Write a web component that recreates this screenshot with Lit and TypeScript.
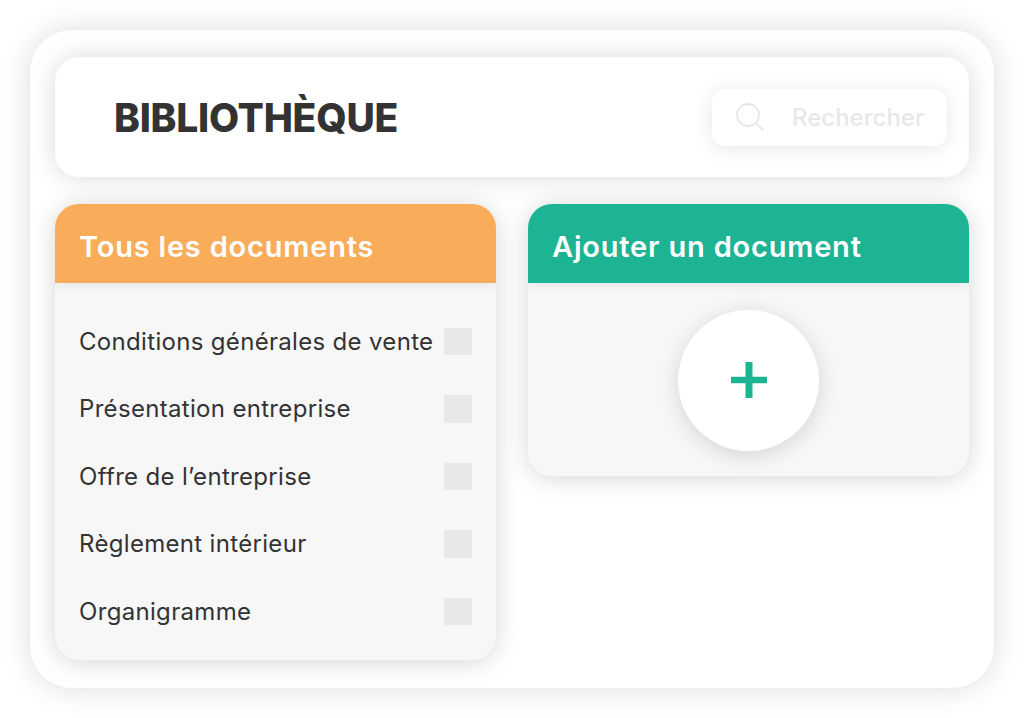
import { LitElement, html, css } from 'lit'
import { customElement } from 'lit/decorators.js'

const DOCUMENTS = [
  'Conditions générales de vente',
  'Présentation entreprise',
  'Offre de l’entreprise',
  'Règlement intérieur',
  'Organigramme',
]

@customElement('app-root')
export class AppRoot extends LitElement {
  static styles = css`
    :host {
      display: block;
      width: 1024px;
      height: 718px;
      padding: 30px;
      box-sizing: border-box;
      background: #fff;
      font-family: Inter, 'Noto Sans', sans-serif;
      color: #333;
      overflow: hidden;
    }
    .frame {
      height: 658px;
      box-sizing: border-box;
      padding: 27px 25px;
      background: #fff;
      border-radius: 42px;
      box-shadow: 0 0 30px rgba(0, 0, 0, 0.14);
      display: flex;
      flex-direction: column;
      gap: 27px;
    }
    .top {
      height: 120px;
      flex: none;
      box-sizing: border-box;
      padding: 0 22px 0 59px;
      background: #fff;
      border-radius: 24px;
      box-shadow: 0 0 26px rgba(0, 0, 0, 0.15);
      display: flex;
      align-items: center;
      justify-content: space-between;
    }
    h1 {
      margin: 0;
      font-size: 39px;
      font-weight: 800;
      letter-spacing: -0.25px;
    }
    .search {
      width: 235.5px;
      height: 57px;
      box-sizing: border-box;
      padding-left: 24.5px;
      background: #fff;
      border-radius: 13px;
      box-shadow: 0 2px 20px rgba(0, 0, 0, 0.1);
      display: flex;
      align-items: center;
      gap: 28px;
      color: #e8e8e8;
      font-size: 24px;
      font-weight: 500;
    }
    .search svg {
      width: 28px;
      height: 28px;
      flex: none;
    }
    .columns {
      display: grid;
      grid-template-columns: 441px 441px;
      justify-content: space-between;
      align-items: start;
    }
    .panel {
      background: #f7f7f7;
      border-radius: 24px;
      box-shadow: 0 2px 24px rgba(0, 0, 0, 0.17);
      overflow: hidden;
    }
    .head {
      height: 78.5px;
      box-sizing: border-box;
      padding: 6px 0 0 24px;
      display: flex;
      align-items: center;
      color: #fff;
      font-size: 29px;
      font-weight: 600;
      letter-spacing: 0.8px;
      position: relative;
      box-shadow: 0 2px 12px rgba(0, 0, 0, 0.08);
    }
    .orange {
      background: #f9ac5a;
    }
    .green {
      background: #1cb493;
    }
    ul {
      list-style: none;
      margin: 0;
      padding: 25px 24.5px 15px 24px;
    }
    li {
      height: 67.5px;
      display: flex;
      align-items: center;
      justify-content: space-between;
      font-size: 24px;
      font-weight: 400;
      letter-spacing: 0.32px;
    }
    .check {
      width: 27.5px;
      height: 27.5px;
      background: #e8e8e8;
    }
    .add {
      height: 193.5px;
      display: flex;
      justify-content: center;
      padding-top: 27.5px;
      box-sizing: border-box;
    }
    .circle {
      width: 141px;
      height: 141px;
      border-radius: 50%;
      background: #fff;
      box-shadow: 0 4px 22px rgba(0, 0, 0, 0.14);
      display: flex;
      align-items: center;
      justify-content: center;
    }
    .circle svg {
      width: 36px;
      height: 36px;
      margin-top: -1px;
    }
  `

  render() {
    return html`
      <div class="frame">
        <header class="top">
          <h1>BIBLIOTHÈQUE</h1>
          <div class="search">
            <svg viewBox="0 0 28 28" fill="none" stroke="#e8e8e8" stroke-width="1.800">
              <circle cx="12" cy="12" r="11" />
              <path d="M20 20 L27.5 27.5" />
            </svg>
            <span>Rechercher</span>
          </div>
        </header>
        <div class="columns">
          <section class="panel">
            <div class="head orange">Tous les documents</div>
            <ul>
              ${DOCUMENTS.map((d) => html`<li><span>${d}</span><span class="check"></span></li>`)}
            </ul>
          </section>
          <section class="panel">
            <div class="head green">Ajouter un document</div>
            <div class="add">
              <div class="circle">
                <svg viewBox="0 0 36 36" fill="#1cb493">
                  <path d="M14.500 0h7v14.700H36v6.600H21.500V36h-7V21.300H0v-6.600h14.500z" />
                </svg>
              </div>
            </div>
          </section>
        </div>
      </div>
    `
  }
}
